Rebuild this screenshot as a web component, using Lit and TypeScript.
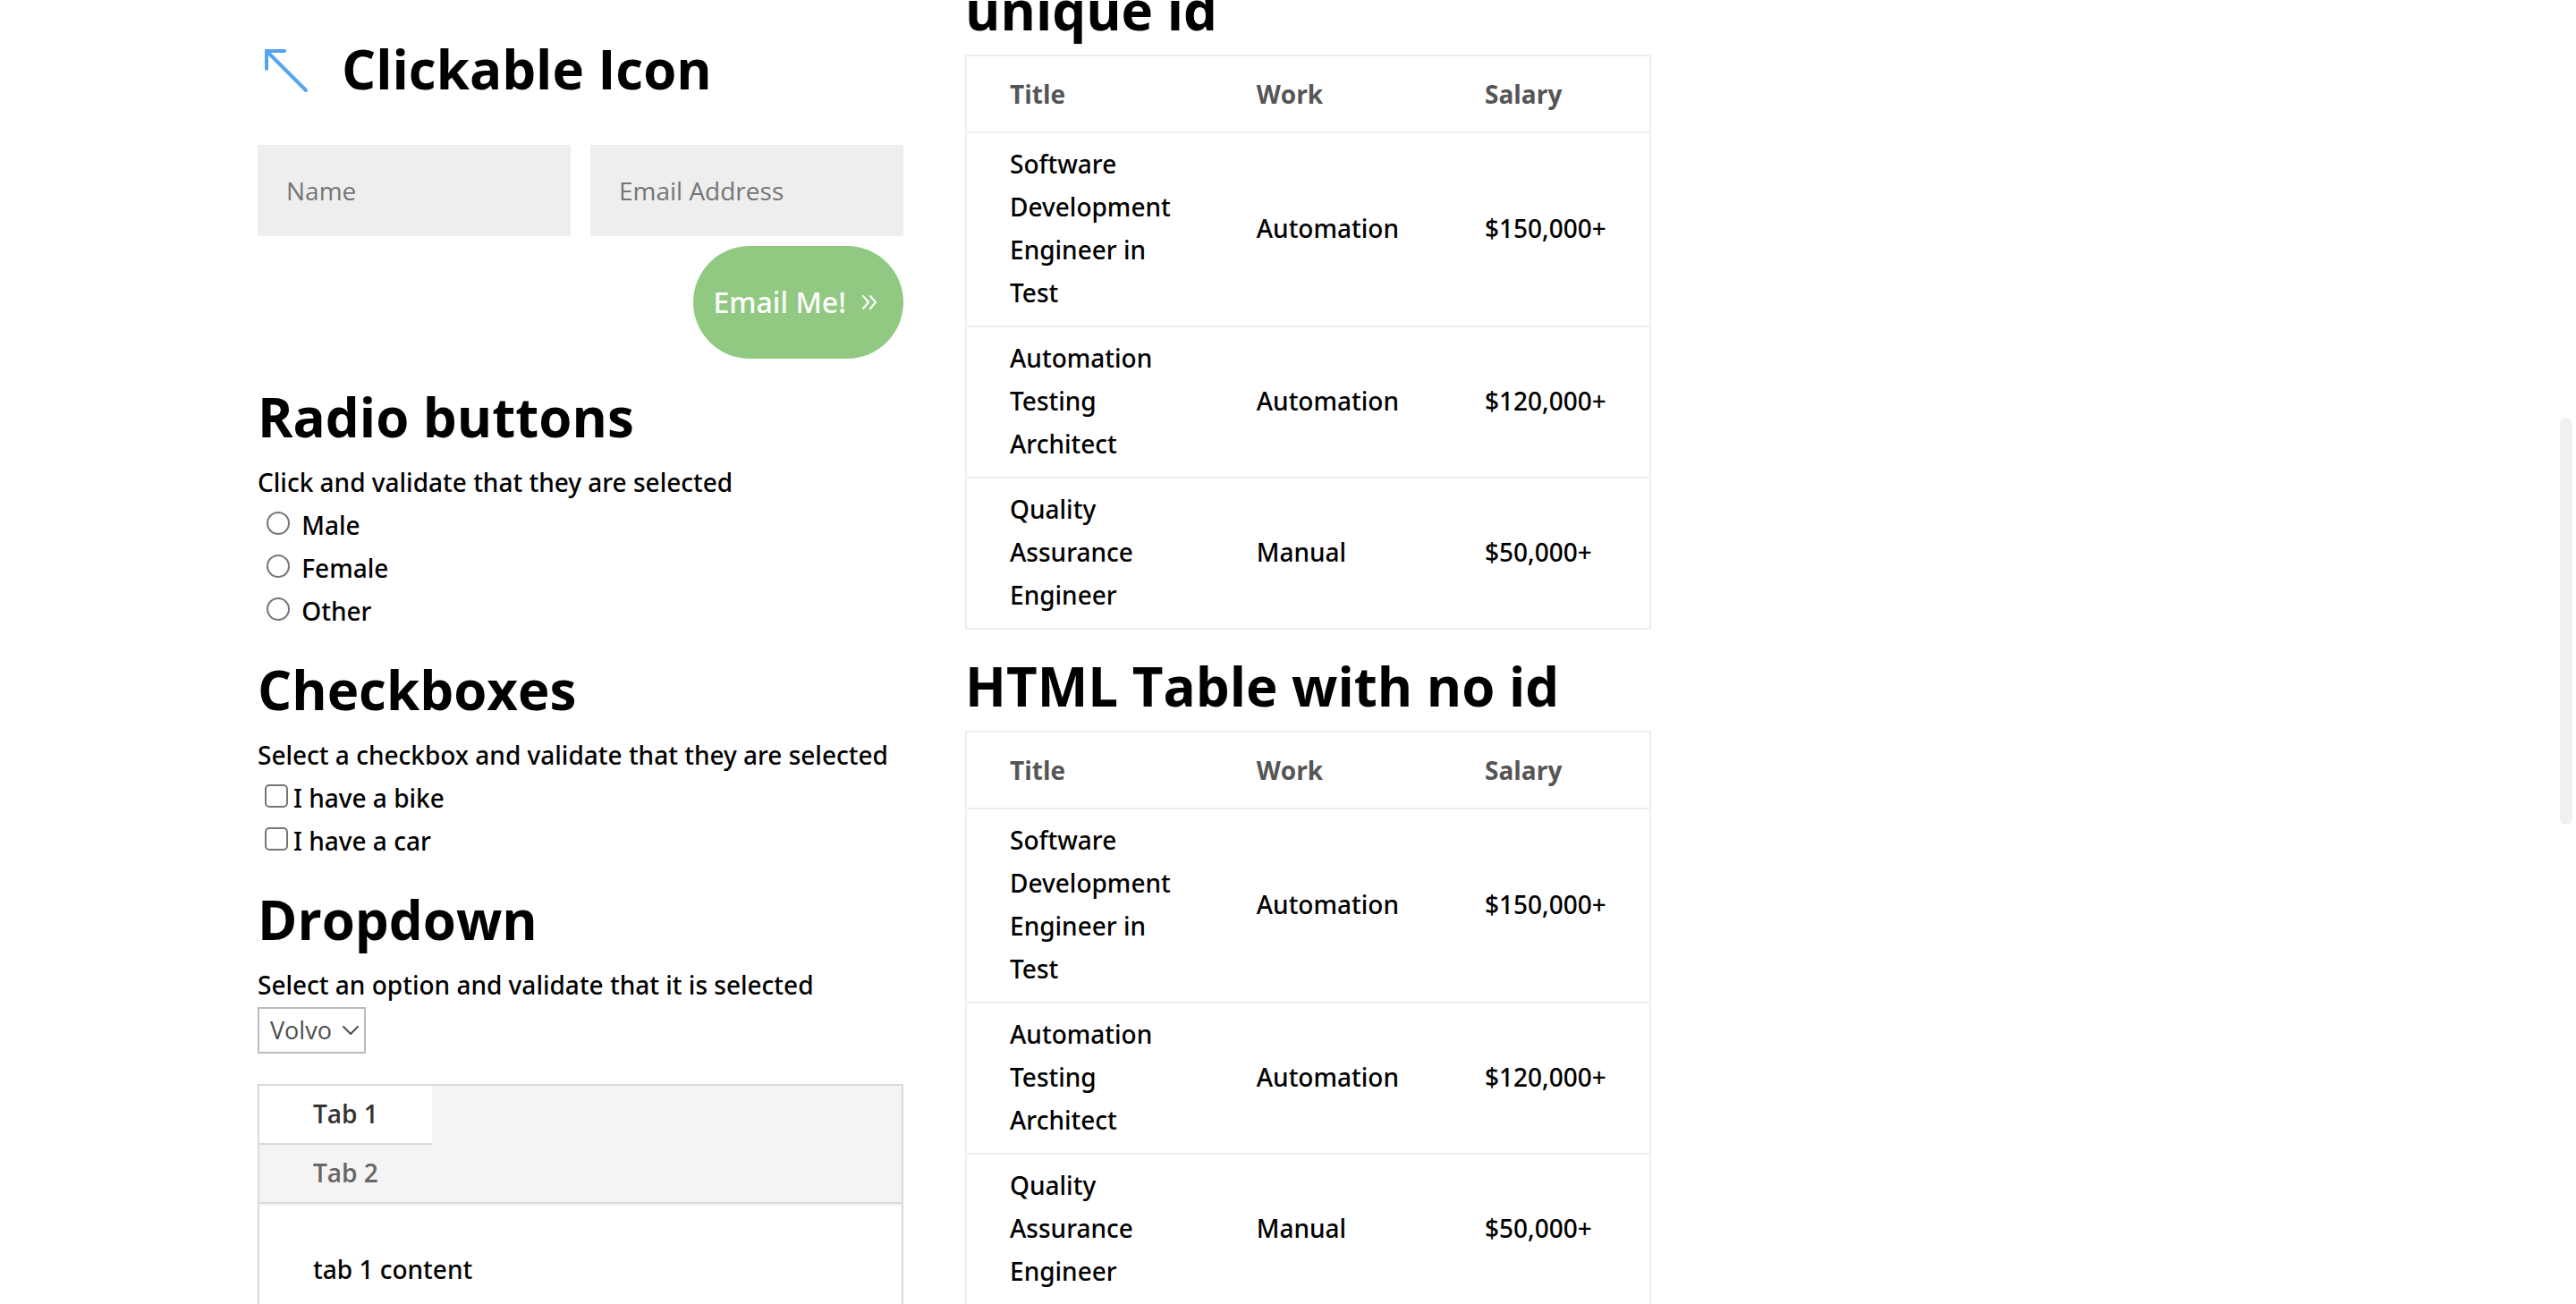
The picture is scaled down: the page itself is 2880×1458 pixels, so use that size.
import { LitElement, html, css } from "lit";
import { customElement, property, state } from "lit/decorators.js";
import { classMap } from "lit/directives/class-map.js";

interface Job {
  title: string;
  work: string;
  salary: string;
}

const JOBS: Job[] = [
  { title: "Software Development Engineer in Test", work: "Automation", salary: "$150,000+" },
  { title: "Automation Testing Architect", work: "Automation", salary: "$120,000+" },
  { title: "Quality Assurance Engineer", work: "Manual", salary: "$50,000+" },
];

const headingStyles = css`
  h2 {
    margin: 0;
    padding-bottom: 20px;
    font-family: "Open Sans", "Noto Sans", sans-serif;
    font-size: 60px;
    line-height: 60px;
    font-weight: 700;
    color: #000;
  }
`;

@customElement("job-table")
export class JobTable extends LitElement {
  @property() heading = "";

  static styles = [
    headingStyles,
    css`
      :host {
        display: block;
      }
      .jobs {
        width: 100%;
        border: 2px solid #eee;
        border-spacing: 0;
        text-align: left;
      }
      .head {
        padding: 18px 48px;
        font-family: "Open Sans", "Noto Sans", sans-serif;
        font-weight: 700;
        color: #555;
      }
      .cell {
        padding: 10px 48px 13px;
        border-top: 2px solid #eee;
      }
    `,
  ];

  render() {
    return html`
      <h2 id="caption">${this.heading}</h2>
      <table class="jobs" aria-labelledby="caption">
        <thead>
          <tr>
            <th class="head" scope="col">Title</th>
            <th class="head" scope="col">Work</th>
            <th class="head" scope="col">Salary</th>
          </tr>
        </thead>
        <tbody>
          ${JOBS.map(
            (job) => html`<tr>
              <td class="cell">${job.title}</td>
              <td class="cell">${job.work}</td>
              <td class="cell">${job.salary}</td>
            </tr>`
          )}
        </tbody>
      </table>
    `;
  }
}

@customElement("tab-box")
export class TabBox extends LitElement {
  @state() private active = 1;

  static styles = css`
    :host {
      display: block;
      border: 2px solid #d9d9d9;
    }
    .tabs {
      display: flex;
      flex-direction: column;
      align-items: flex-start;
      background: #f4f4f4;
      border-bottom: 2px solid #d9d9d9;
    }
    .tab {
      padding: 7px 60px 9px;
      border: 0;
      background: transparent;
      font: inherit;
      font-family: "Open Sans", "Noto Sans", sans-serif;
      font-weight: 600;
      color: #666;
      cursor: pointer;
    }
    .tab:first-child {
      border-bottom: 2px solid #d9d9d9;
    }
    .tab.active {
      background: #fff;
      color: #333;
    }
    .panel {
      padding: 47px 60px 48px;
      border-top: 2px solid #f4f4f4;
      background: #fff;
    }
  `;

  render() {
    return html`
      <div class="tabs" role="tablist">
        ${[1, 2].map(
          (n) => html`<button
            type="button"
            role="tab"
            class=${classMap({ tab: true, active: n === this.active })}
            aria-selected=${n === this.active}
            @click=${() => (this.active = n)}
          >Tab ${n}</button>`
        )}
      </div>
      <div class="panel" role="tabpanel">tab ${this.active} content</div>
    `;
  }
}

@customElement("app-root")
export class AppRoot extends LitElement {
  static styles = [
    headingStyles,
    css`
      :host {
        display: block;
        font-family: "Noto Sans", "Open Sans", sans-serif;
        font-size: 28px;
        line-height: 48px;
        font-weight: 500;
        color: #000;
      }
      .page {
        position: relative;
        box-sizing: border-box;
        height: 100vh;
        overflow: hidden;
        padding: 0 10%;
        background: #fff;
      }
      .columns {
        display: grid;
        grid-template-columns: repeat(3, minmax(0, 1fr));
        column-gap: 3%;
        align-items: start;
      }
      .column {
        display: flex;
        flex-direction: column;
      }
      .forms {
        gap: 34px;
        padding-top: 47px;
      }
      .forms h2 {
        padding-bottom: 19px;
      }
      .tables {
        gap: 33px;
        margin-top: -19px;
      }
      .blurb {
        display: flex;
        align-items: flex-start;
        gap: 30px;
        margin-bottom: 17px;
      }
      .icon-link,
      .arrow {
        display: block;
        width: 64px;
        height: 64px;
      }
      .blurb .title {
        padding: 0;
      }
      .contact {
        display: grid;
        grid-template-columns: 1fr 1fr;
        gap: 11px 22px;
        margin-bottom: 1px;
      }
      .field {
        box-sizing: border-box;
        width: 100%;
        min-width: 0;
        padding: 27px 32px;
        border: 0;
        border-radius: 0;
        background: #eee;
        font: inherit;
        font-family: "Open Sans", "Noto Sans", sans-serif;
        font-weight: 400;
        color: #666;
      }
      .field::placeholder {
        color: #757575;
        opacity: 1;
      }
      .send {
        grid-column: 2;
        justify-self: end;
        display: flex;
        align-items: center;
        gap: 18px;
        padding: 39px 30px 39px 22px;
        border: 0;
        border-radius: 100px;
        background: #92c982;
        font: inherit;
        font-size: 32px;
        color: #fff;
        cursor: pointer;
      }
      .chevrons {
        width: 16px;
        height: 16px;
      }
      .line {
        margin: 0;
      }
      .mark {
        appearance: none;
        box-sizing: border-box;
        width: 26px;
        height: 26px;
        margin: 0 6px 0 8px;
        border: 2px solid #767676;
        border-radius: 5px;
        background: #fff;
      }
      .mark.round {
        margin-left: 10px;
        border-radius: 50%;
      }
      .mark:checked {
        background: #0075ff;
      }
      .picker {
        display: grid;
        width: max-content;
        align-items: center;
        padding-top: 1px;
      }
      .select {
        grid-area: 1 / 1;
        appearance: none;
        box-sizing: border-box;
        padding: 0 36px 0 12px;
        border: 2px solid #bbb;
        border-radius: 0;
        background: #fff;
        font: inherit;
        font-family: "Open Sans", "Noto Sans", sans-serif;
        font-size: 27px;
        font-weight: 400;
        color: #4e4e4e;
      }
      .caret {
        grid-area: 1 / 1;
        justify-self: end;
        width: 18px;
        height: 12px;
        margin-right: 8px;
        pointer-events: none;
      }
      .thumb {
        position: absolute;
        top: 32%;
        right: 4px;
        width: 14px;
        height: 455px;
        border-radius: 7px;
        background: #f0f0f0;
      }
    `,
  ];

  private radio(value: string) {
    return html`<div class="line">
      <label><input class="mark round" type="radio" name="gender" value=${value} /> ${value}</label>
    </div>`;
  }

  private checkbox(label: string) {
    return html`<div class="line">
      <label><input class="mark" type="checkbox" name="vehicle" />${label}</label>
    </div>`;
  }

  render() {
    return html`
      <main class="page">
        <div class="columns">
          <div class="column forms">
            <section class="blurb">
              <a class="icon-link" href="#icon" aria-label="Clickable Icon">
                <svg class="arrow" viewBox="0 0 64 64" fill="none" stroke="#54a4f0" stroke-width="4" stroke-linecap="round" stroke-linejoin="miter">
                  <path d="M30 10H10V30M10 10L54 54" />
                </svg>
              </a>
              <h2 class="title">Clickable Icon</h2>
            </section>

            <form class="contact" @submit=${(e: Event) => e.preventDefault()}>
              <input class="field" type="text" name="name" placeholder="Name" aria-label="Name" />
              <input class="field" type="email" name="email" placeholder="Email Address" aria-label="Email Address" />
              <button class="send" type="submit">
                Email Me!
                <svg class="chevrons" viewBox="0 0 16 16" fill="none" stroke="#fff" stroke-width="2" stroke-linecap="round" stroke-linejoin="round" aria-hidden="true">
                  <path d="M1 1L7 8L1 15M9 1L15 8L9 15" />
                </svg>
              </button>
            </form>

            <section>
              <h2>Radio buttons</h2>
              <p class="line">Click and validate that they are selected</p>
              ${["Male", "Female", "Other"].map((v) => this.radio(v))}
            </section>

            <section>
              <h2>Checkboxes</h2>
              <p class="line">Select a checkbox and validate that they are selected</p>
              ${["I have a bike", "I have a car"].map((v) => this.checkbox(v))}
            </section>

            <section>
              <h2>Dropdown</h2>
              <label class="line" for="car">Select an option and validate that it is selected</label>
              <div class="picker">
                <select class="select" id="car">
                  <option>Volvo</option>
                </select>
                <svg class="caret" viewBox="0 0 18 12" fill="none" stroke="#4e4e4e" stroke-width="2" stroke-linecap="round" stroke-linejoin="round" aria-hidden="true">
                  <path d="M1 2L9 10L17 2" />
                </svg>
              </div>
            </section>

            <tab-box></tab-box>
          </div>

          <div class="column tables">
            <job-table heading="unique id"></job-table>
            <job-table heading="HTML Table with no id"></job-table>
          </div>
        </div>
        <div class="thumb"></div>
      </main>
    `;
  }
}
